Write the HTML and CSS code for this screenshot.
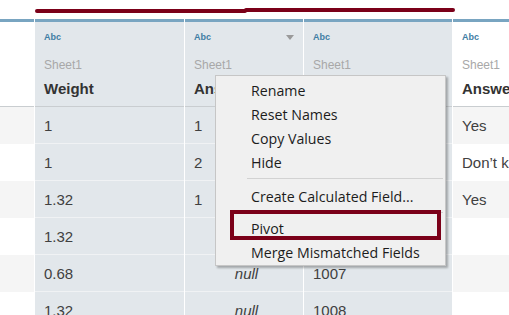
FILE: index.html
```html
<!DOCTYPE html>
<html>
<head>
<meta charset="utf-8">
<link rel="stylesheet" href="styles.css">
</head>
<body>
<div class="page">
  <div class="spacer"></div>
  <div class="grid">
    <div class="hd plain"></div>
    <div class="hd sel"><div class="type">Abc</div><div class="src">Sheet1</div><div class="name">Weight</div></div>
    <div class="hd sel"><div class="type"><span>Abc</span><svg class="arrow" width="8" height="5" viewBox="0 0 8 5"><path d="M0 0H8L4 5Z" fill="#9a9a9a"/></svg></div><div class="src">Sheet1</div><div class="name">Answer</div></div>
    <div class="hd sel"><div class="type">Abc</div><div class="src">Sheet1</div><div class="name">ID</div></div>
    <div class="hd plain"><div class="type">Abc</div><div class="src">Sheet1</div><div class="name">Answer</div></div>

    <div class="c odd"></div><div class="c s">1</div><div class="c s">1</div><div class="c s"></div><div class="c odd">Yes</div>
    <div class="c even"></div><div class="c s">1</div><div class="c s">2</div><div class="c s"></div><div class="c even">Don’t know</div>
    <div class="c odd"></div><div class="c s">1.32</div><div class="c s">1</div><div class="c s"></div><div class="c odd">Yes</div>
    <div class="c even"></div><div class="c s">1.32</div><div class="c s"></div><div class="c s"></div><div class="c even"></div>
    <div class="c odd"></div><div class="c s">0.68</div><div class="c s nul">null</div><div class="c s">1007</div><div class="c odd"></div>
    <div class="c even"></div><div class="c s">1.32</div><div class="c s nul">null</div><div class="c s">1008</div><div class="c even"></div>
  </div>

  <div class="menu">
    <div class="item">Rename</div>
    <div class="item">Reset Names</div>
    <div class="item">Copy Values</div>
    <div class="item">Hide</div>
    <div class="sep sep1"></div>
    <div class="item">Create Calculated Field...</div>
    <div class="sep sep2"></div>
    <div class="item">Pivot</div>
    <div class="item">Merge Mismatched Fields</div>
  </div>
  <div class="pivot-box"></div>
  <div class="mark mark1"></div>
  <div class="mark mark2"></div>
</div>
</body>
</html>
```
FILE: styles.css
```css
html, body {
  margin: 0;
  padding: 0;
  background: #ffffff;
}
.page {
  position: relative;
  width: 509px;
  height: 315px;
  overflow: hidden;
  font-family: "Liberation Sans", Arial, sans-serif;
  color: #3a3a3a;
}
.spacer {
  height: 19px;
}
.grid {
  display: grid;
  grid-template-columns: 34px 149px 118px 148px 1fr;
  grid-auto-rows: 37px;
  column-gap: 1px;
  grid-template-rows: 88px;
}
.hd {
  border-top: 3px solid #79a5c1;
  border-bottom: 1px solid #c9cdd0;
  box-sizing: border-box;
  padding: 0 9px 0 9px;
  display: flex;
  flex-direction: column;
  overflow: hidden;
  white-space: nowrap;
}
.hd.sel {
  background: #e2e7eb;
}
.hd.plain {
  background: #ffffff;
}
.type {
  margin-top: 9px;
  height: 12px;
  line-height: 12px;
  font-size: 9px;
  font-weight: bold;
  color: #3f7ea4;
  display: flex;
  justify-content: space-between;
  align-items: center;
}
.arrow {
  display: block;
}
.src {
  margin-top: 15px;
  height: 14px;
  line-height: 14px;
  font-size: 12px;
  color: #a8a8a8;
}
.name {
  margin-top: 8px;
  height: 18px;
  line-height: 18px;
  font-size: 15px;
  font-weight: bold;
  color: #333333;
}
.c {
  box-sizing: border-box;
  padding: 0 9px 0 9px;
  font-size: 15px;
  line-height: 37px;
  white-space: nowrap;
  overflow: hidden;
  color: #404040;
}
.c.s {
  background: #e2e7eb;
  border-bottom: 1px solid #f0f2f4;
  line-height: 37px;
}
.c.odd {
  background: #f5f5f5;
}
.c.even {
  background: #ffffff;
}
.c.nul {
  font-style: italic;
  text-align: center;
  padding-left: 14px;
}
.menu {
  position: absolute;
  left: 215px;
  top: 75px;
  width: 231px;
  height: 191px;
  box-sizing: border-box;
  background: #f0f0f0;
  border: 1px solid #c6c6c6;
  box-shadow: 2px 2px 2px rgba(0, 0, 0, 0.28);
  padding-top: 3px;
  font-family: "Open Sans", "Noto Sans", sans-serif;
  font-size: 14.2px;
  color: #1c1c1c;
}
.item {
  height: 24px;
  line-height: 24px;
  padding-left: 35px;
  white-space: nowrap;
}
.sep {
  margin-left: 31px;
  margin-right: 2px;
  border-top: 1px solid #d2d2d2;
}
.sep1 {
  margin-top: 3px;
  margin-bottom: 6px;
}
.sep2 {
  margin-top: 3px;
  margin-bottom: 4px;
}
.pivot-box {
  position: absolute;
  left: 230px;
  top: 210px;
  width: 211px;
  height: 30px;
  box-sizing: border-box;
  border: 4px solid #7b0019;
}
.mark {
  position: absolute;
  height: 4px;
  border-radius: 2px;
  background: #7b0019;
}
.mark1 {
  left: 35px;
  top: 9px;
  width: 212px;
}
.mark2 {
  left: 244px;
  top: 8px;
  width: 211px;
}
```
